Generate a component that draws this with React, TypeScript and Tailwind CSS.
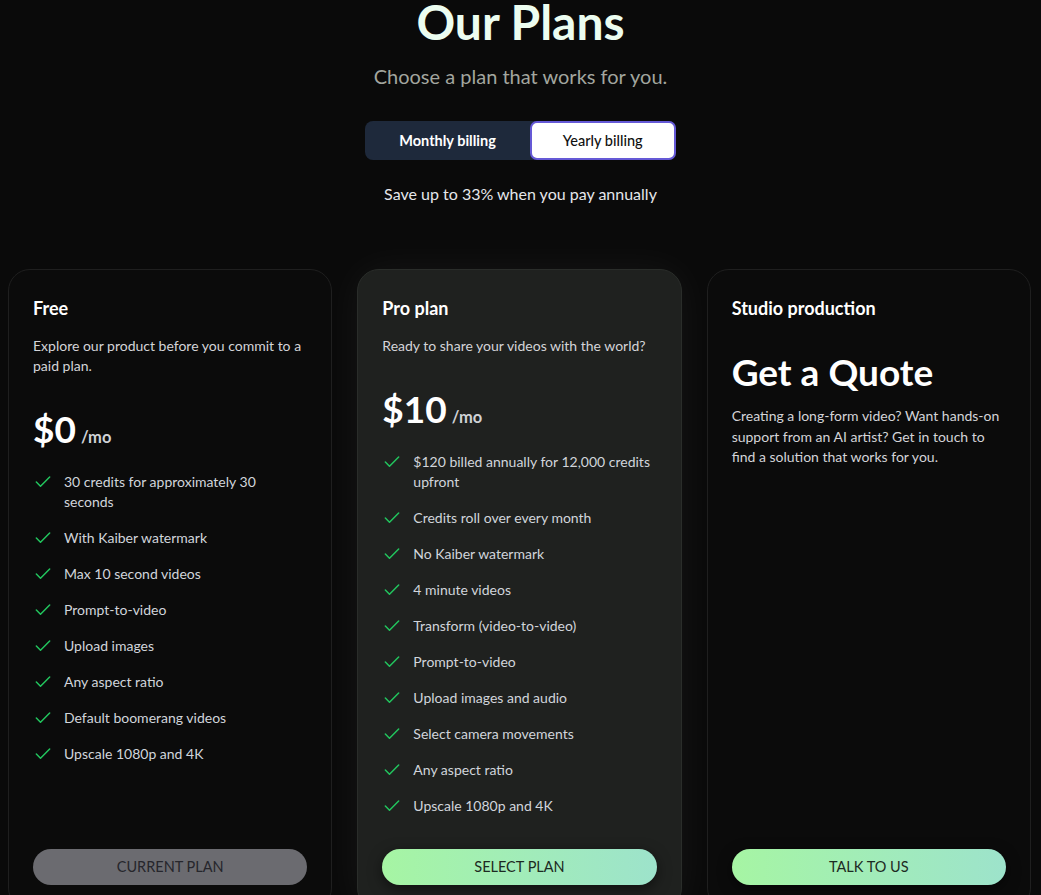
import React from "react";
import { Check } from "lucide-react";

type Plan = {
  title: string;
  desc?: string;
  price?: string;
  quote?: string;
  quoteDesc?: string;
  features: string[];
  button: string;
  variant: "current" | "primary";
  highlight?: boolean;
};

const plans: Plan[] = [
  {
    title: "Free",
    desc: "Explore our product before you commit to a paid plan.",
    price: "$0",
    features: [
      "30 credits for approximately 30 seconds",
      "With Kaiber watermark",
      "Max 10 second videos",
      "Prompt-to-video",
      "Upload images",
      "Any aspect ratio",
      "Default boomerang videos",
      "Upscale 1080p and 4K",
    ],
    button: "CURRENT PLAN",
    variant: "current",
  },
  {
    title: "Pro plan",
    desc: "Ready to share your videos with the world?",
    price: "$10",
    features: [
      "$120 billed annually for 12,000 credits upfront",
      "Credits roll over every month",
      "No Kaiber watermark",
      "4 minute videos",
      "Transform (video-to-video)",
      "Prompt-to-video",
      "Upload images and audio",
      "Select camera movements",
      "Any aspect ratio",
      "Upscale 1080p and 4K",
    ],
    button: "SELECT PLAN",
    variant: "primary",
    highlight: true,
  },
  {
    title: "Studio production",
    quote: "Get a Quote",
    quoteDesc:
      "Creating a long-form video? Want hands-on support from an AI artist? Get in touch to find a solution that works for you.",
    features: [],
    button: "TALK TO US",
    variant: "primary",
  },
];

function Card({ plan }: { plan: Plan }) {
  return (
    <div
      className={
        plan.highlight
          ? "flex flex-col rounded-[22px] border border-[#2a2d2a] bg-[#1f211f] px-[24px] pt-[24px] pb-[24px] shadow-[0_0_40px_rgba(255,255,255,0.05)]"
          : "flex flex-col rounded-[22px] border border-[#1f1f1f] bg-[#0b0b0b] px-[24px] pt-[24px] pb-[24px]"
      }
    >
      <h3 className="text-[18px] leading-[28px] font-bold text-white">{plan.title}</h3>
      {plan.desc && (
        <p className="mt-[14px] text-[14px] leading-[20px] text-[#d4d4d8]">{plan.desc}</p>
      )}
      {plan.price && (
        <div className="mt-[33px] flex items-baseline gap-[5px]">
          <span className="text-[37px] leading-[40px] font-bold text-white">{plan.price}</span>
          <span className="text-[16.5px] font-bold text-[#cfd2d6]">/mo</span>
        </div>
      )}
      {plan.quote && (
        <div className="mt-[30px] text-[37px] leading-[40px] font-bold text-white">{plan.quote}</div>
      )}
      {plan.quoteDesc && (
        <p className="mt-[14px] text-[14px] leading-[20.5px] text-[#d4d4d8]">{plan.quoteDesc}</p>
      )}
      {plan.features.length > 0 && (
        <ul className="mt-[22px] flex flex-col gap-[16px]">
          {plan.features.map((f) => (
            <li key={f} className="flex items-start gap-[11px]">
              <Check size={20} strokeWidth={1.8} className="shrink-0 text-[#22c55e]" />
              <span className="text-[14px] leading-[20px] text-[#d1d5db]">{f}</span>
            </li>
          ))}
        </ul>
      )}
      <div className="mt-auto shrink-0 pt-[33px]">
        <button
          className={
            plan.variant === "current"
              ? "h-[36px] w-full rounded-full bg-[#6b6b70] text-[14.5px] text-[#26262c]"
              : "h-[36px] w-full rounded-full bg-gradient-to-r from-[#a6f5a3] to-[#9de3cb] text-[14.5px] text-[#1d2a22] shadow-[0_4px_14px_rgba(0,0,0,0.5)]"
          }
        >
          {plan.button}
        </button>
      </div>
    </div>
  );
}

export default function App() {
  return (
    <div className="min-h-screen overflow-hidden bg-[#0a0a0a] font-['Lato',sans-serif]">
      <div className="flex flex-col items-center">
        <h1 className="text-[48px] leading-[44px] font-bold text-[#ecfdf0]">Our Plans</h1>
        <p className="mt-[18px] text-[20px] leading-[28px] text-[#a2a69f]">Choose a plan that works for you.</p>
        <div className="mt-[31px] flex h-[39px] rounded-[8px] bg-[#1e293b]">
          <button className="px-[34px] text-[14.5px] font-bold text-white">Monthly billing</button>
          <button className="rounded-[7px] border-2 border-[#6559d6] bg-white px-[31px] text-[14.5px] font-medium text-[#111]">
            Yearly billing
          </button>
        </div>
        <p className="mt-[22px] text-[16px] leading-[24px] text-[#e5e7eb]">Save up to 33% when you pay annually</p>
      </div>
      <div className="mt-[63px] grid grid-cols-3 gap-[25px] pl-[8px] pr-[10px]">
        {plans.map((p) => (
          <Card key={p.title} plan={p} />
        ))}
      </div>
    </div>
  );
}
